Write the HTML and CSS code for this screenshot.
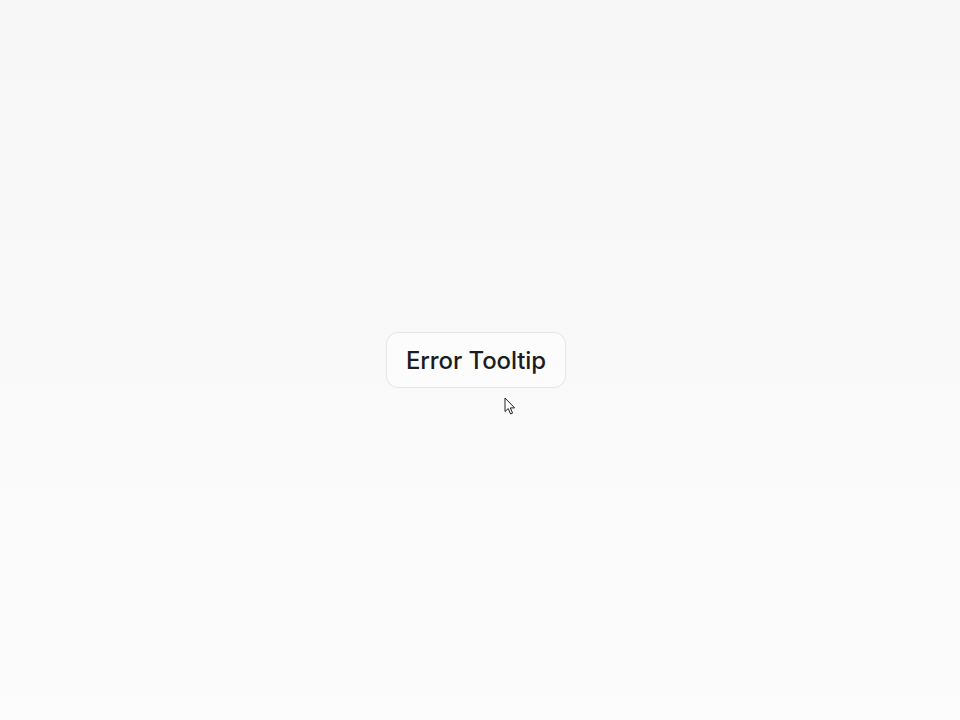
FILE: index.html
```html
<!DOCTYPE html>
<html>
<head>
<meta charset="utf-8">
<link rel="stylesheet" href="styles.css">
</head>
<body>
<main class="stage">
  <div class="anchor">
    <button class="btn">Error Tooltip</button>
    <svg class="cursor" width="13" height="19" viewBox="0 0 13 19">
      <path d="M1 1 L1 14.5 L4.2 11.6 L6.6 17 L8.6 16.1 L6.3 10.9 L10.6 10.9 Z" fill="#fff" stroke="#222" stroke-width="1" stroke-linejoin="round"/>
    </svg>
  </div>
</main>
</body>
</html>
```
FILE: styles.css
```css
html, body {
  margin: 0;
  padding: 0;
  height: 100%;
}
body {
  background: linear-gradient(180deg, #f7f7f7 0%, #f9f9f9 50%, #fcfcfc 100%);
  font-family: "Inter", "Noto Sans", sans-serif;
}
.stage {
  height: 720px;
  display: flex;
  justify-content: center;
  align-items: flex-start;
}
.anchor {
  position: relative;
  margin-top: 332px;
  margin-left: -8px;
}
.btn {
  width: 180px;
  height: 56px;
  border: 1px solid #e4e4e4;
  border-radius: 12px;
  background: #fcfcfc;
  color: #1c1c22;
  font-family: "Inter", "Noto Sans", sans-serif;
  font-size: 24px;
  font-weight: 500;
  letter-spacing: -0.1px;
  padding: 0;
  display: flex;
  align-items: center;
  justify-content: center;
}
.cursor {
  position: absolute;
  left: 118px;
  top: 65px;
}
```
